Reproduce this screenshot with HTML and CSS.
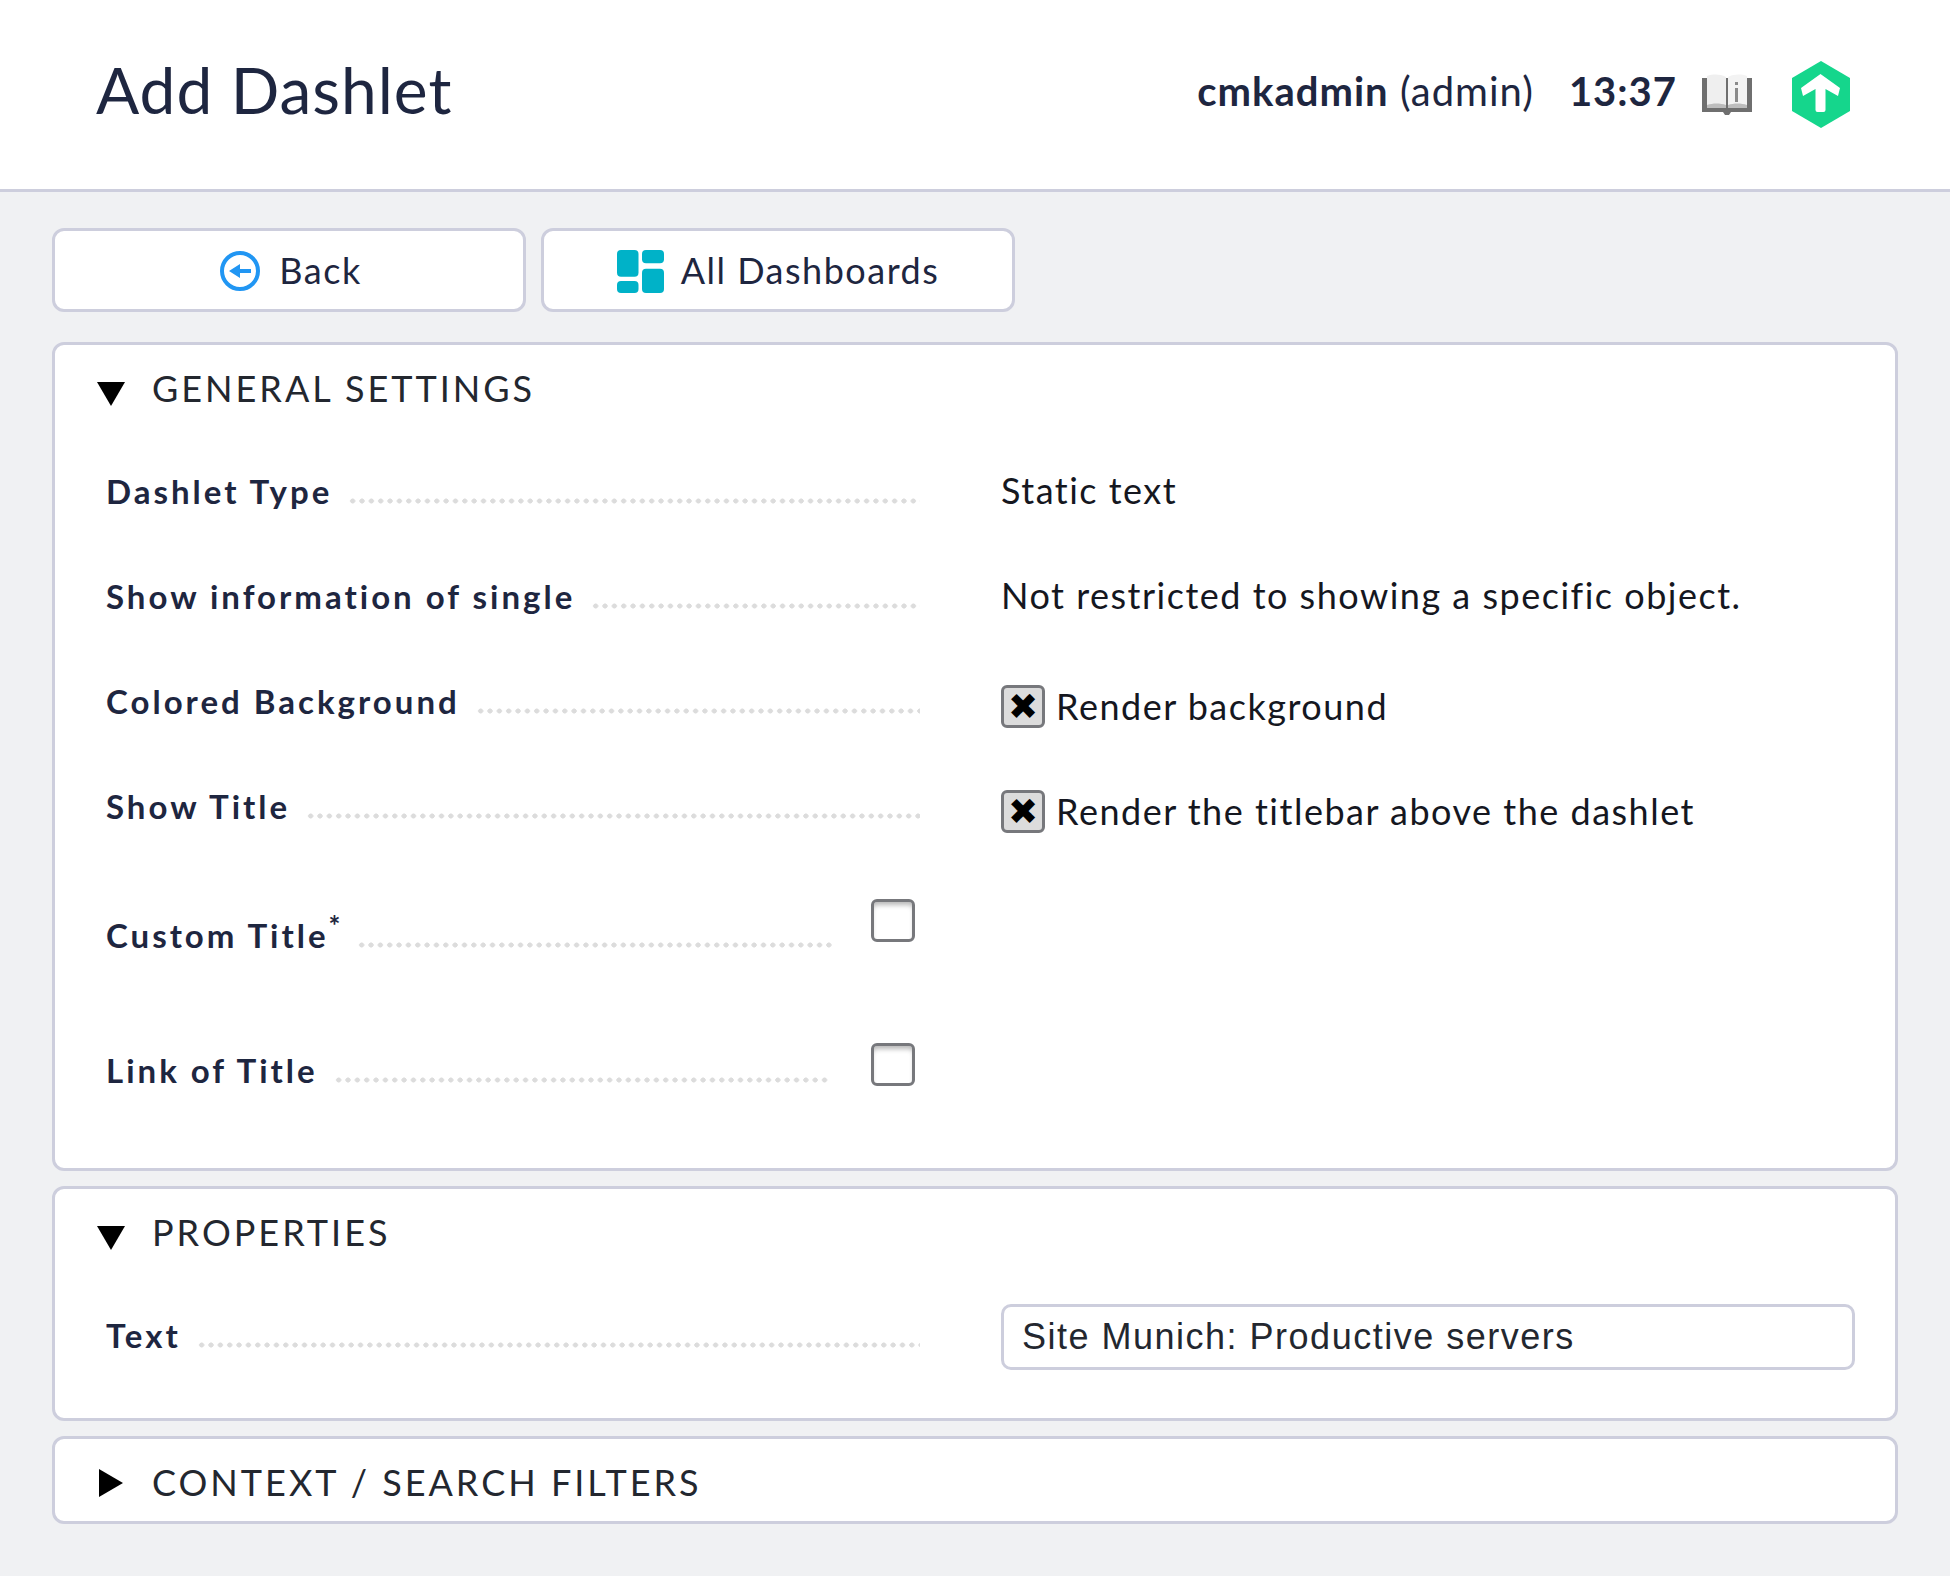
FILE: index.html
```html
<!DOCTYPE html>
<html lang="en">
<head>
    <meta charset="UTF-8">
    <title>Add Dashlet</title>
    <link rel="stylesheet" href="styles.css">
</head>
<body>
    <header class="top">
        <h1>Add Dashlet</h1>
        <div class="status">
            <span class="user"><b>cmkadmin</b> (admin)</span>
            <b class="clock">13:37</b>
            <svg class="book" viewBox="0 0 50 42">
                <path d="M0 4h50v34H29l-2 3h-4l-2-3H0z" fill="#6f6f6f"/>
                <path d="M5 2c6-2 13-2 19 1v30c-6-2-13-2-19 0z" fill="#efefef"/>
                <path d="M26 3c6-3 13-3 19-1v31c-6-2-13-2-19 0z" fill="#f3f3f3"/>
                <path d="M5 31c6-2 13-2 19 0v3H5zM26 31c6-2 13-2 19 0v3H26z" fill="#bdbdbd"/>
                <rect x="33" y="14" width="3" height="14" fill="#8a8a8a"/>
                <rect x="33" y="8" width="3" height="3" fill="#8a8a8a"/>
            </svg>
            <svg class="logo" viewBox="0 0 58 67">
                <path d="M29 0l29 17v33L29 67 0 50V17z" fill="#15d68c"/>
                <path d="M28.5 13L48 27l-2 8-12.500-7v21q0 2-2 2h-6q-2 0-2-2V28L11 35l-2-8z" fill="#fff"/>
            </svg>
        </div>
    </header>

    <main>
        <nav class="buttons">
            <a class="btn back">
                <svg class="back-icon" viewBox="0 0 40 40">
                    <circle cx="20" cy="20" r="18" fill="none" stroke="#2196f3" stroke-width="4"/>
                    <path d="M9 20l11-7v5h11v4H20v5z" fill="#2196f3"/>
                </svg>
                Back
            </a>
            <a class="btn">
                <svg class="dash-icon" viewBox="0 0 47 43">
                    <rect x="0" y="0" width="21.500" height="26.700" rx="4" fill="#00b2c8"/>
                    <rect x="25" y="0" width="22" height="13.300" rx="4" fill="#00b2c8"/>
                    <rect x="25" y="18.700" width="22" height="24.300" rx="4" fill="#00b2c8"/>
                    <rect x="0" y="31" width="21.500" height="12" rx="4" fill="#00b2c8"/>
                </svg>
                All Dashboards
            </a>
        </nav>

        <section class="panel general">
            <h2><span class="tri-down"></span>GENERAL SETTINGS</h2>
            <div class="row">
                <div class="label"><span>Dashlet Type</span><i class="dots"></i></div>
                <div class="value">Static text</div>
            </div>
            <div class="row">
                <div class="label"><span>Show information of single</span><i class="dots"></i></div>
                <div class="value">Not restricted to showing a specific object.</div>
            </div>
            <div class="row">
                <div class="label"><span>Colored Background</span><i class="dots"></i></div>
                <div class="value check"><span class="box checked">&#10006;</span>Render background</div>
            </div>
            <div class="row">
                <div class="label"><span>Show Title</span><i class="dots"></i></div>
                <div class="value check"><span class="box checked">&#10006;</span>Render the titlebar above the dashlet</div>
            </div>
            <div class="row opt custom">
                <div class="label"><span>Custom Title<sup>*</sup></span><i class="dots"></i></div>
                <span class="box"></span>
            </div>
            <div class="row opt link">
                <div class="label"><span>Link of Title</span><i class="dots"></i></div>
                <span class="box"></span>
            </div>
        </section>

        <section class="panel properties">
            <h2><span class="tri-down"></span>PROPERTIES</h2>
            <div class="row">
                <div class="label"><span>Text</span><i class="dots"></i></div>
                <div class="value"><input class="text-input" type="text" value="Site Munich: Productive servers"></div>
            </div>
        </section>

        <section class="panel closed">
            <h2><span class="tri-right"></span>CONTEXT / SEARCH FILTERS</h2>
        </section>
    </main>
</body>
</html>
```

FILE: styles.css
```css
body {
    margin: 0;
    min-height: 1576px;
    background-color: #f0f1f3;
    font-family: Lato, "Open Sans", sans-serif;
    color: #1e2640;
}
.top {
    display: flex;
    align-items: center;
    justify-content: space-between;
    height: 189px;
    padding: 0 100px 0 96px;
    background-color: white;
    border-bottom: 3px solid #cdcedd;
}
.top h1 {
    margin: 0 0 10px;
    font-size: 64px;
    font-weight: 400;
    letter-spacing: 1px;
}
.status {
    display: flex;
    align-items: center;
    font-size: 40px;
    letter-spacing: 1px;
}
.user {
    margin: 0 35px 8px 0;
}
.clock {
    margin: 0 25px 8px 0;
}
.book {
    width: 50px;
    height: 42px;
    margin-right: 40px;
}
.logo {
    width: 58px;
    height: 67px;
}
main {
    padding: 36px 52px 0;
}
.buttons {
    display: flex;
    gap: 15px;
    margin-bottom: 30px;
}
.btn {
    display: flex;
    align-items: center;
    justify-content: center;
    gap: 20px;
    width: 474px;
    height: 84px;
    box-sizing: border-box;
    background-color: white;
    border: 3px solid #cdcedd;
    border-radius: 12px;
    font-size: 36px;
    letter-spacing: 1.5px;
}
.back {
    padding-left: 3px;
}
.back-icon {
    width: 40px;
    height: 40px;
    margin: 2px -1px 0 1px;
}
.dash-icon {
    width: 47px;
    height: 43px;
    margin: 2px -3px 0 0;
}
.panel {
    box-sizing: border-box;
    margin-bottom: 15px;
    padding: 0 40px 0 42px;
    background-color: white;
    border: 3px solid #cdcedd;
    border-radius: 12px;
}
.general {
    height: 829px;
}
.properties {
    height: 235px;
}
.closed {
    height: 88px;
}
.panel h2 {
    display: flex;
    align-items: center;
    margin: 0 0 7px;
    height: 86px;
    font-size: 36px;
    font-weight: 400;
    letter-spacing: 3px;
    color: #23272f;
}
.closed h2 {
    margin: 0;
    height: 86px;
}
.tri-down {
    width: 0;
    height: 0;
    margin: 12px 27px 0 0;
    border-left: 14px solid transparent;
    border-right: 14px solid transparent;
    border-top: 24px solid black;
}
.tri-right {
    width: 0;
    height: 0;
    margin: 2px 29px 0 2px;
    border-top: 14px solid transparent;
    border-bottom: 14px solid transparent;
    border-left: 24px solid black;
}
.row {
    display: flex;
    align-items: center;
    height: 105px;
    padding-left: 9px;
    font-size: 36px;
    letter-spacing: 1.5px;
}
.label {
    display: flex;
    align-items: center;
    width: 814px;
    margin-right: 81px;
    font-size: 33px;
    font-weight: 700;
    letter-spacing: 3px;
}
.dots {
    flex: 1;
    height: 6px;
    margin: 20px 0 0 16px;
    background-image: radial-gradient(circle, #dcdcdc 2.3px, transparent 2.8px);
    background-size: 9.35px 6px;
}
.value {
    margin-bottom: 2px;
    color: #15171f;
}
.check {
    display: flex;
    align-items: center;
    margin: 11px 0 0;
}
.box {
    display: flex;
    align-items: center;
    justify-content: center;
    box-sizing: border-box;
    width: 44px;
    height: 43px;
    background-color: white;
    border: 3px solid #77787c;
    border-radius: 6px;
    box-shadow: inset 0 5px 5px -2px #b8b8b8;
}
.box.checked {
    margin-right: 11px;
    background-color: #dcdcdc;
    box-shadow: none;
    color: black;
    font-family: "DejaVu Sans", sans-serif;
    font-size: 36px;
    letter-spacing: 0;
}
.opt .label {
    margin-right: 37px;
    width: 728px;
}
.custom {
    height: 175px;
    align-items: flex-start;
    padding-top: 41px;
    box-sizing: border-box;
}
.custom .label {
    margin-top: 16px;
}
.link {
    height: 106px;
    align-items: flex-start;
    padding-top: 10px;
    box-sizing: border-box;
}
.link .label {
    width: 725px;
    margin: 7px 40px 0 0;
}
sup {
    font-size: 28px;
    line-height: 0;
    font-weight: 700;
    letter-spacing: 0;
}
.properties .value {
    margin: 5px 0 0;
}
.text-input {
    display: block;
    box-sizing: border-box;
    width: 854px;
    height: 66px;
    padding: 0 18px;
    background-color: white;
    border: 3px solid #cdcedd;
    border-radius: 10px;
    font-family: "Liberation Sans", Arial, sans-serif;
    font-size: 36px;
    letter-spacing: 1.5px;
    color: #23272f;
}
```
